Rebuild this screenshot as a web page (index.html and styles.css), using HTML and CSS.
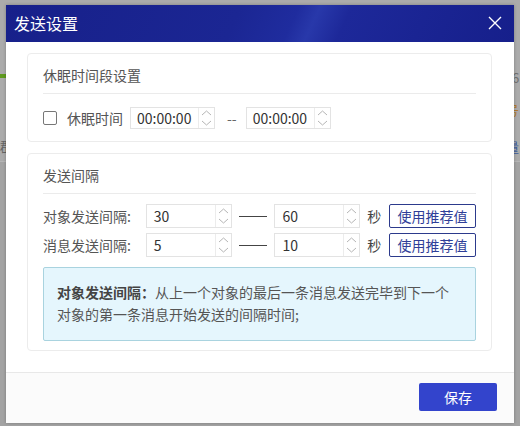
FILE: index.html
```html
<!DOCTYPE html>
<html lang="zh-CN">
<head>
<meta charset="utf-8">
<title>发送设置</title>
<link rel="stylesheet" href="styles.css">
</head>
<body>
<div class="page">
  <div class="page-top"></div>
  <span class="bg-bar"></span>
  <span class="bg-text bg-l">郡</span>
  <span class="bg-text bg-r1">6</span>
  <span class="bg-text bg-r2">号</span>
  <span class="bg-text bg-r3">量</span>
</div>

<div class="dialog">
  <div class="dlg-head">
    <span class="dlg-title">发送设置</span>
    <svg class="dlg-close" width="14" height="14" viewBox="0 0 14 14"><path d="M1 1L13 13M13 1L1 13" stroke="#fff" stroke-width="1.4" fill="none"/></svg>
  </div>
  <div class="dlg-body">
    <section class="card">
      <div class="card-title">休眠时间段设置</div>
      <div class="row row-sleep">
        <span class="checkbox"></span>
        <span class="lbl-sleep">休眠时间</span>
        <div class="spin spin-time">
          <span class="spin-val">00:00:00</span>
          <span class="spin-btns">
            <svg width="15" height="10" viewBox="0 0 15 10"><path d="M3 7L7.5 3L12 7" stroke="#b5b5b5" stroke-width="1" fill="none"/></svg>
            <svg width="15" height="10" viewBox="0 0 15 10"><path d="M3 3L7.5 7L12 3" stroke="#b5b5b5" stroke-width="1" fill="none"/></svg>
          </span>
        </div>
        <span class="range-sep">--</span>
        <div class="spin spin-time">
          <span class="spin-val">00:00:00</span>
          <span class="spin-btns">
            <svg width="15" height="10" viewBox="0 0 15 10"><path d="M3 7L7.5 3L12 7" stroke="#b5b5b5" stroke-width="1" fill="none"/></svg>
            <svg width="15" height="10" viewBox="0 0 15 10"><path d="M3 3L7.5 7L12 3" stroke="#b5b5b5" stroke-width="1" fill="none"/></svg>
          </span>
        </div>
      </div>
    </section>

    <section class="card card-interval">
      <div class="card-title">发送间隔</div>
      <div class="row row-int">
        <span class="lbl-int">对象发送间隔:</span>
        <div class="spin spin-num">
          <span class="spin-val">30</span>
          <span class="spin-btns">
            <svg width="15" height="11" viewBox="0 0 15 11"><path d="M3 8L7.5 4L12 8" stroke="#b5b5b5" stroke-width="1" fill="none"/></svg>
            <svg width="15" height="11" viewBox="0 0 15 11"><path d="M3 3L7.5 7L12 3" stroke="#b5b5b5" stroke-width="1" fill="none"/></svg>
          </span>
        </div>
        <span class="dash"></span>
        <div class="spin spin-num">
          <span class="spin-val">60</span>
          <span class="spin-btns">
            <svg width="15" height="11" viewBox="0 0 15 11"><path d="M3 8L7.5 4L12 8" stroke="#b5b5b5" stroke-width="1" fill="none"/></svg>
            <svg width="15" height="11" viewBox="0 0 15 11"><path d="M3 3L7.5 7L12 3" stroke="#b5b5b5" stroke-width="1" fill="none"/></svg>
          </span>
        </div>
        <span class="unit">秒</span>
        <button class="btn-outline">使用推荐值</button>
      </div>
      <div class="row row-int">
        <span class="lbl-int">消息发送间隔:</span>
        <div class="spin spin-num">
          <span class="spin-val">5</span>
          <span class="spin-btns">
            <svg width="15" height="11" viewBox="0 0 15 11"><path d="M3 8L7.5 4L12 8" stroke="#b5b5b5" stroke-width="1" fill="none"/></svg>
            <svg width="15" height="11" viewBox="0 0 15 11"><path d="M3 3L7.5 7L12 3" stroke="#b5b5b5" stroke-width="1" fill="none"/></svg>
          </span>
        </div>
        <span class="dash"></span>
        <div class="spin spin-num">
          <span class="spin-val">10</span>
          <span class="spin-btns">
            <svg width="15" height="11" viewBox="0 0 15 11"><path d="M3 8L7.5 4L12 8" stroke="#b5b5b5" stroke-width="1" fill="none"/></svg>
            <svg width="15" height="11" viewBox="0 0 15 11"><path d="M3 3L7.5 7L12 3" stroke="#b5b5b5" stroke-width="1" fill="none"/></svg>
          </span>
        </div>
        <span class="unit">秒</span>
        <button class="btn-outline">使用推荐值</button>
      </div>
      <div class="info">
        <p class="info-line"><b>对象发送间隔：</b>从上一个对象的最后一条消息发送完毕到下一个</p>
        <p class="info-line">对象的第一条消息开始发送的间隔时间;</p>
      </div>
    </section>
  </div>
  <div class="dlg-foot">
    <button class="btn-primary">保存</button>
  </div>
</div>
</body>
</html>
```

FILE: styles.css
```css
* { box-sizing: border-box; }
html, body {
  margin: 0;
  padding: 0;
  width: 520px;
  height: 426px;
  overflow: hidden;
  font-family: "Noto Sans CJK SC", "Noto Sans", sans-serif;
  font-size: 14px;
  color: #555;
}
.page {
  position: relative;
  width: 520px;
  height: 426px;
  background: #a3a3a3;
}
.page-top {
  height: 162px;
  background: #ababab;
  border-bottom: 1px solid #b6b6b6;
}
.bg-bar {
  position: absolute;
  left: 0;
  top: 74px;
  width: 8px;
  height: 4px;
  background: #5f9a1f;
}
.bg-text {
  position: absolute;
  font-size: 13px;
  line-height: 16px;
  color: #666;
}
.bg-l { left: 0; top: 138px; }
.bg-r1 { left: 512px; top: 70px; color: #707070; }
.bg-r2 { left: 506px; top: 102px; color: #b07a30; }
.bg-r3 { left: 506px; top: 139px; color: #3c5a9a; }

.dialog {
  position: absolute;
  left: 6px;
  top: 5px;
  width: 508px;
  height: 418px;
  background: #fff;
  display: flex;
  flex-direction: column;
  box-shadow: 0 0 3px rgba(0,0,0,0.25);
}
.dlg-head {
  height: 37px;
  flex: none;
  display: flex;
  align-items: center;
  justify-content: space-between;
  padding: 0 12px 0 8px;
  background: linear-gradient(115deg, #17208a 0%, #1b2693 45%, #1f2c9e 56%, #2838aa 60%, #1d2899 66%, #161f8b 100%);
}
.dlg-title {
  color: #fff;
  font-size: 16px;
  line-height: 20px;
  margin-top: -1px;
}
.dlg-close { display: block; margin-top: -1px; }

.dlg-body {
  flex: 1;
  padding: 11px 22px 0 21px;
  display: flex;
  flex-direction: column;
  gap: 11px;
}
.card {
  border: 1px solid #ececec;
  border-radius: 4px;
  padding: 10px 15px 12px 15px;
}
.card-interval { padding-bottom: 9px; }
.card-title {
  line-height: 22px;
  padding-bottom: 7px;
  border-bottom: 1px solid #ebebeb;
  color: #555;
}
.row {
  display: flex;
  align-items: center;
}
.row-sleep { margin-top: 13px; height: 22px; }
.checkbox {
  width: 14px;
  height: 14px;
  border: 1px solid #777;
  border-radius: 2px;
  background: #fff;
  margin-right: 10px;
}
.lbl-sleep { margin-right: 7px; line-height: 20px; }
.spin {
  display: flex;
  border: 1px solid #e3e3e3;
  background: #fff;
}
.spin-time { width: 85px; height: 22px; }
.spin-num { width: 86px; height: 24px; }
.spin-val {
  flex: 1;
  padding-left: 6px;
  color: #333;
  line-height: 20px;
  font-size: 14px;
}
.spin-num .spin-val { padding-left: 7px; line-height: 22px; }
.spin-btns {
  width: 16px;
  border-left: 1px solid #ececec;
  display: flex;
  flex-direction: column;
  justify-content: center;
}
.spin-btns svg { display: block; }
.range-sep {
  margin: 0 9px 0 12px;
  color: #666;
  line-height: 20px;
}
.row-int { height: 24px; margin-top: 10px; }
.row-int + .row-int { margin-top: 5px; }
.lbl-int {
  width: 103px;
  line-height: 20px;
}
.dash {
  width: 29px;
  height: 1px;
  background: #444;
  margin: 0 7px;
}
.unit {
  margin: 0 8px 0 7px;
  color: #444;
  line-height: 20px;
}
.btn-outline {
  width: 87px;
  height: 24px;
  border: 1px solid #2c3a8c;
  border-radius: 2px;
  background: #fff;
  color: #2f3e98;
  font-family: inherit;
  font-size: 14px;
  line-height: 20px;
  padding: 0;
}
.info {
  margin-top: 10px;
  background: #e5f6fd;
  border: 1px solid #a9d3df;
  border-radius: 2px;
  padding: 13px 13px 15px 13px;
  color: #555;
  height: 74px;
}
.info-line {
  margin: 0;
  line-height: 22px;
  white-space: nowrap;
}
.info b { color: #444; font-weight: bold; }

.dlg-foot {
  flex: none;
  height: 51px;
  border-top: 1px solid #e8e8e8;
  background: #fbfbfb;
  display: flex;
  justify-content: flex-end;
  align-items: flex-start;
  padding: 10px 17px 0 0;
}
.btn-primary {
  width: 78px;
  height: 28px;
  border: none;
  border-radius: 2px;
  background: #3344cc;
  color: #fff;
  font-family: inherit;
  font-size: 14px;
  padding: 0;
}
```
